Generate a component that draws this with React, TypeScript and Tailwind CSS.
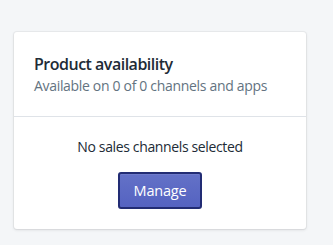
import React from "react";

export default function App() {
  return (
    <div
      className="w-[333px] h-[245px] bg-[#f4f6f8] pt-8 pl-[14px]"
      style={{ fontFamily: '"Open Sans", "Noto Sans", sans-serif' }}
    >
      <div className="w-[292px] bg-white rounded-[3px] shadow-[0_0_0_1px_rgba(63,63,68,0.05),0_1px_3px_0_rgba(63,63,68,0.15)]">
        <div className="px-5 pt-5 pb-5 border-b border-[#dfe3e8]">
          <h2 className="text-[16px] leading-6 font-semibold text-[#212b36] tracking-[-0.5px]">Product availability</h2>
          <p className="text-[14px] leading-5 text-[#637381] tracking-[-0.32px]">Available on 0 of 0 channels and apps</p>
        </div>
        <div className="px-5 pt-5 pb-5 flex flex-col items-center">
          <p className="text-[14px] leading-5 text-[#212b36] tracking-[-0.36px]">No sales channels selected</p>
          <button className="mt-[15px] w-[84px] h-[37px] rounded-[3px] border-2 border-[#222c74] text-white text-[14.5px] tracking-[-0.2px] bg-gradient-to-b from-[#6371c7] to-[#5563c1] shadow-[inset_0_1px_0_0_#6f7bcb]">
            Manage
          </button>
        </div>
      </div>
    </div>
  );
}
